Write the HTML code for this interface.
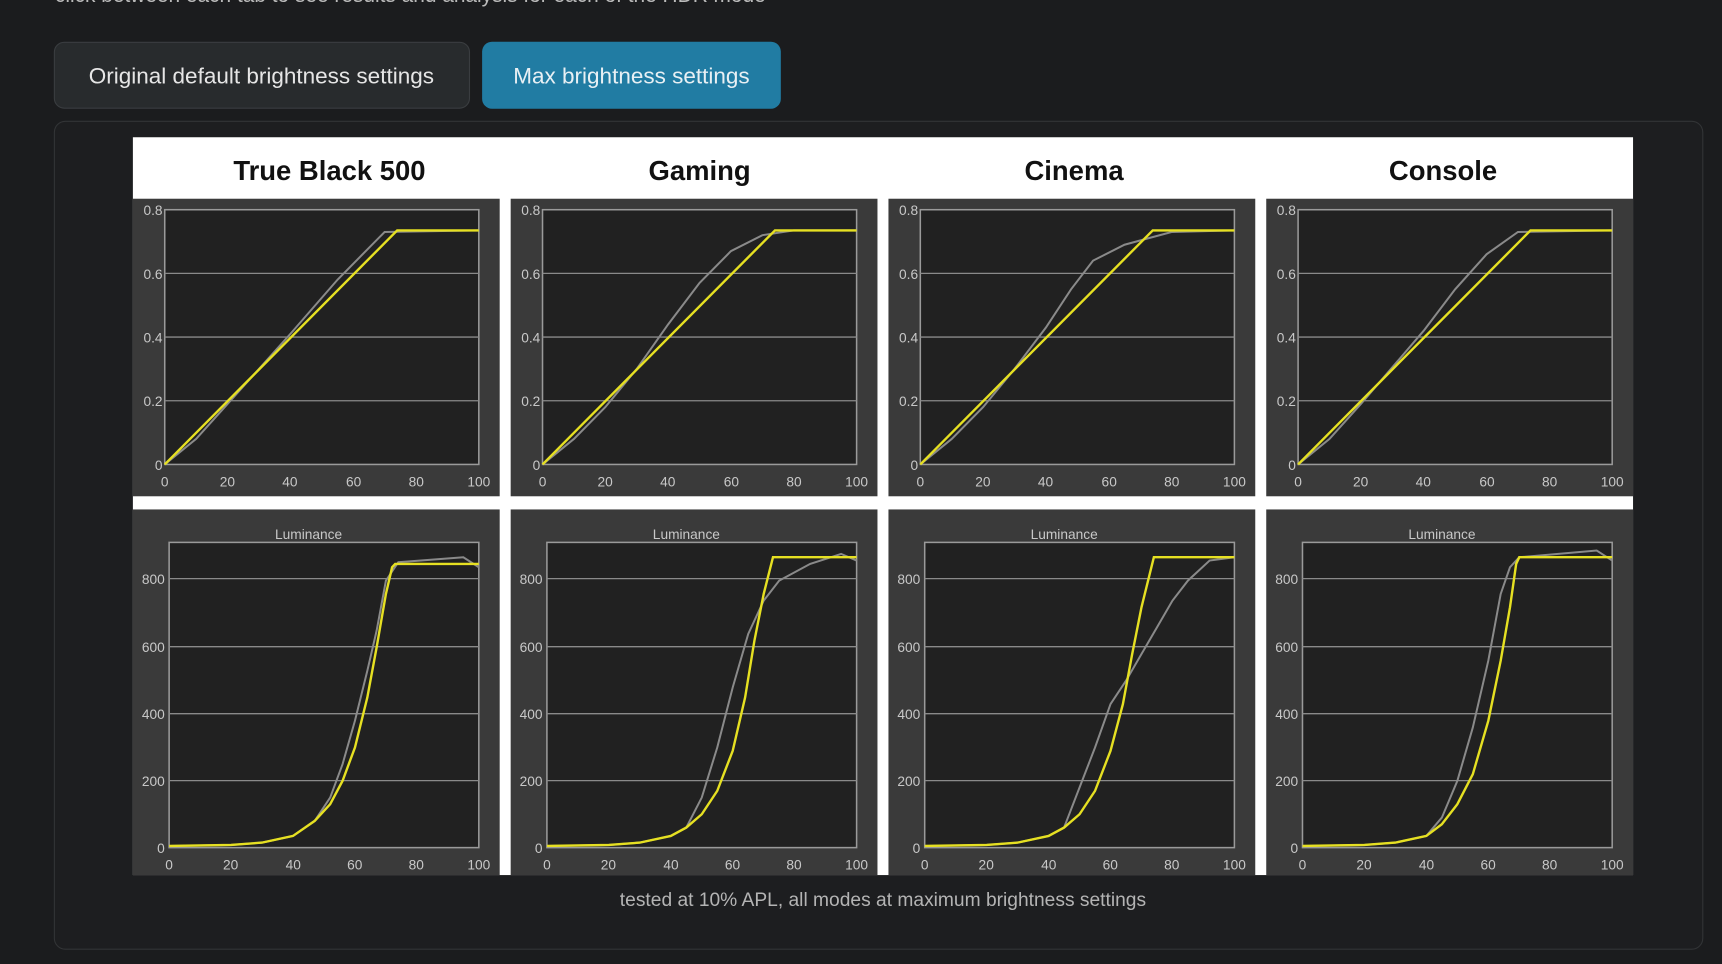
<!DOCTYPE html>
<html><head><meta charset="utf-8"><style>
html,body{margin:0;padding:0;background:#1b1c1e;width:1722px;height:964px;overflow:hidden}
svg{display:block}
.ax{font-family:"Liberation Sans",sans-serif;font-size:12.5px;fill:#c8c8c8}
.t{font-family:"Liberation Sans",sans-serif;font-size:25px;font-weight:bold;fill:#111}
.y{fill:none;stroke:#e6e022;stroke-width:2.4}
.g{fill:none;stroke:#8a8a8a;stroke-width:2}
.grid{stroke:#8a8a8a;stroke-width:1.2}
</style></head><body>
<svg width="1722" height="964" viewBox="0 0 1568 878" preserveAspectRatio="none">
<defs>
<g id="top">
  <rect x="0" y="56" width="334" height="271" fill="#3a3a3a"/>
  <rect x="29" y="66" width="286" height="232" fill="#212121" stroke="#9a9a9a" stroke-width="1.4"/>
  <line class="grid" x1="29" x2="315" y1="124" y2="124"/>
  <line class="grid" x1="29" x2="315" y1="182" y2="182"/>
  <line class="grid" x1="29" x2="315" y1="240" y2="240"/>
  <g class="ax" text-anchor="end">
    <text x="27" y="71">0.8</text><text x="27" y="129">0.6</text><text x="27" y="187">0.4</text><text x="27" y="245">0.2</text><text x="27" y="303">0</text>
  </g>
  <g class="ax" text-anchor="middle">
    <text x="29" y="318">0</text><text x="86" y="318">20</text><text x="143" y="318">40</text><text x="201" y="318">60</text><text x="258" y="318">80</text><text x="315" y="318">100</text>
  </g>
</g>
<g id="bot">
  <rect x="0" y="339" width="334" height="333" fill="#3a3a3a"/>
  <rect x="33" y="369" width="282" height="278" fill="#212121" stroke="#9a9a9a" stroke-width="1.4"/>
  <line class="grid" x1="33" x2="315" y1="402" y2="402"/>
  <line class="grid" x1="33" x2="315" y1="464" y2="464"/>
  <line class="grid" x1="33" x2="315" y1="525" y2="525"/>
  <line class="grid" x1="33" x2="315" y1="586" y2="586"/>
  <text class="ax" x="160" y="366" text-anchor="middle">Luminance</text>
  <g class="ax" text-anchor="end">
    <text x="29" y="407">800</text><text x="29" y="469">600</text><text x="29" y="530">400</text><text x="29" y="591">200</text><text x="29" y="652">0</text>
  </g>
  <g class="ax" text-anchor="middle">
    <text x="33" y="667">0</text><text x="89" y="667">20</text><text x="146" y="667">40</text><text x="202" y="667">60</text><text x="258" y="667">80</text><text x="315" y="667">100</text>
  </g>
</g>
</defs>

<text x="50" y="2" font-family="Liberation Sans,sans-serif" font-size="19" fill="#bbb">click between each tab to see results and analysis for each of the HDR mode</text>

<rect x="49.5" y="38.5" width="378" height="60" rx="9" fill="#282b2d" stroke="#3a3d40"/>
<text x="238" y="76" text-anchor="middle" font-family="Liberation Sans,sans-serif" font-size="20.5" fill="#e6e6e6">Original default brightness settings</text>
<rect x="439" y="38" width="272" height="61" rx="9" fill="#217ca3"/>
<text x="575" y="76" text-anchor="middle" font-family="Liberation Sans,sans-serif" font-size="20.5" fill="#e8f0f4">Max brightness settings</text>

<rect x="49.5" y="110.5" width="1501" height="754" rx="10" fill="#1d1e20" stroke="#323436"/>

<g transform="translate(121,125)">
  <rect x="0" y="0" width="1366" height="672" fill="#fff"/>
  <text class="t" x="179" y="39" text-anchor="middle">True Black 500</text>
  <text class="t" x="516" y="39" text-anchor="middle">Gaming</text>
  <text class="t" x="857" y="39" text-anchor="middle">Cinema</text>
  <text class="t" x="1193" y="39" text-anchor="middle">Console</text>

  <g>
    <use href="#top"/><use href="#bot"/>
    <g transform="translate(29,298) scale(2.86,-290)">
      <polyline class="g" vector-effect="non-scaling-stroke" points="0,0 10,0.08 20,0.19 40,0.41 55,0.58 70,0.73 100,0.735"/>
      <polyline class="y" vector-effect="non-scaling-stroke" points="0,0 74,0.735 100,0.735"/>
    </g>
    <g transform="translate(33,647) scale(2.82,-0.304)">
      <polyline class="g" vector-effect="non-scaling-stroke" points="0,5 20,8 30,15 40,35 47,80 52,150 56,250 60,380 64,530 67,650 70,800 74,855 95,870 100,840"/>
      <polyline class="y" vector-effect="non-scaling-stroke" points="0,5 20,8 30,15 40,35 47,80 52,130 56,200 60,300 64,450 67,600 70,760 72,840 73,850 100,850"/>
    </g>
  </g>
  <g transform="translate(344,0)">
    <use href="#top"/><use href="#bot"/>
    <g transform="translate(29,298) scale(2.86,-290)">
      <polyline class="g" vector-effect="non-scaling-stroke" points="0,0 10,0.08 20,0.18 30,0.3 40,0.44 50,0.57 60,0.67 70,0.72 80,0.735 100,0.735"/>
      <polyline class="y" vector-effect="non-scaling-stroke" points="0,0 74,0.735 100,0.735"/>
    </g>
    <g transform="translate(33,647) scale(2.82,-0.304)">
      <polyline class="g" vector-effect="non-scaling-stroke" points="0,5 20,8 30,15 40,35 45,60 50,150 55,300 60,480 65,640 70,740 75,800 85,850 95,880 100,860"/>
      <polyline class="y" vector-effect="non-scaling-stroke" points="0,5 20,8 30,15 40,35 45,60 50,100 55,170 60,290 64,450 67,620 70,760 73,870 100,870"/>
    </g>
  </g>
  <g transform="translate(688,0)">
    <use href="#top"/><use href="#bot"/>
    <g transform="translate(29,298) scale(2.86,-290)">
      <polyline class="g" vector-effect="non-scaling-stroke" points="0,0 10,0.08 20,0.18 30,0.3 40,0.43 48,0.55 55,0.64 65,0.69 80,0.73 100,0.735"/>
      <polyline class="y" vector-effect="non-scaling-stroke" points="0,0 74,0.735 100,0.735"/>
    </g>
    <g transform="translate(33,647) scale(2.82,-0.304)">
      <polyline class="g" vector-effect="non-scaling-stroke" points="0,5 20,8 30,15 40,35 45,60 50,180 55,300 60,430 65,500 70,580 75,660 80,740 85,800 92,860 100,870"/>
      <polyline class="y" vector-effect="non-scaling-stroke" points="0,5 20,8 30,15 40,35 45,60 50,100 55,170 60,290 64,430 67,580 70,720 74,870 100,870"/>
    </g>
  </g>
  <g transform="translate(1032,0)">
    <use href="#top"/><use href="#bot"/>
    <g transform="translate(29,298) scale(2.86,-290)">
      <polyline class="g" vector-effect="non-scaling-stroke" points="0,0 10,0.08 20,0.19 40,0.42 50,0.55 60,0.66 70,0.73 100,0.735"/>
      <polyline class="y" vector-effect="non-scaling-stroke" points="0,0 74,0.735 100,0.735"/>
    </g>
    <g transform="translate(33,647) scale(2.82,-0.304)">
      <polyline class="g" vector-effect="non-scaling-stroke" points="0,5 20,8 30,15 40,35 45,90 50,200 55,360 60,560 64,760 67,840 70,870 95,890 100,860"/>
      <polyline class="y" vector-effect="non-scaling-stroke" points="0,5 20,8 30,15 40,35 45,70 50,130 55,220 60,380 64,560 67,720 69,850 70,870 100,870"/>
    </g>
  </g>
</g>

<text x="804" y="825" text-anchor="middle" font-family="Liberation Sans,sans-serif" font-size="17.5" fill="#b4b4b4">tested at 10% APL, all modes at maximum brightness settings</text>
</svg>
</body></html>
